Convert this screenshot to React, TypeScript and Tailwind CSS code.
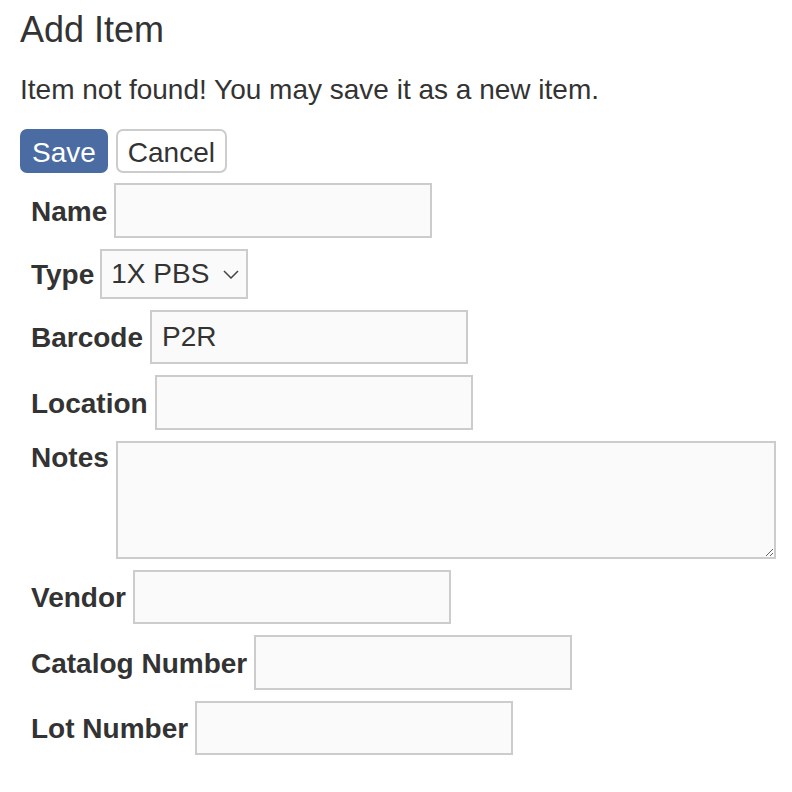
import { useState } from 'react';

const inputCls =
  'h-[54.5px] w-[318px] shrink-0 border-2 border-[#cccccc] bg-[#fafafa] px-[10px] text-[28px] text-[#333] outline-none';

function Row({ label, children, top }: { label: string; children: React.ReactNode; top?: boolean }) {
  return (
    <div className={top ? 'flex items-start gap-[7px]' : 'flex items-center gap-[7px]'}>
      <label className={top ? 'mt-[1px] text-[28px] leading-[32px] font-bold text-[#333]' : 'mt-[3px] text-[28px] leading-[32px] font-bold text-[#333]'}>
        {label}
      </label>
      {children}
    </div>
  );
}

export default function App() {
  const [barcode, setBarcode] = useState('P2R');
  const [type, setType] = useState('1X PBS');

  return (
    <div className="min-h-[792px] bg-white px-[20px] pt-[10px] font-['Liberation_Sans',Arial,sans-serif] text-[#333]">
      <h1 className="text-[36px] leading-[40px] font-normal">Add Item</h1>
      <p className="mt-[24px] text-[28px] leading-[32px]">Item not found! You may save it as a new item.</p>

      <div className="mt-[23px] flex gap-[8px]">
        <button className="h-[44px] rounded-[7px] bg-[#4a6ca3] px-[12px] pt-[3px] text-[28px] leading-[32px] text-white">
          Save
        </button>
        <button className="h-[44px] rounded-[7px] border-2 border-[#cccccc] bg-white px-[10px] pt-[3px] text-[28px] leading-[32px] text-[#333]">
          Cancel
        </button>
      </div>

      <form className="mt-[10px] flex flex-col gap-[11px] pl-[11px]">
        <Row label="Name">
          <input className={inputCls} />
        </Row>
        <Row label="Type">
          <div className="relative -ml-[1px] shrink-0">
            <select
              value={type}
              onChange={(e) => setType(e.target.value)}
              className="h-[50px] w-[148px] appearance-none border-2 border-[#cccccc] bg-[#fafafa] pl-[9px] text-[28px] text-[#333] outline-none"
            >
              <option>1X PBS</option>
            </select>
            <svg
              className="pointer-events-none absolute right-[9px] top-[21px]"
              width="16"
              height="9"
              viewBox="0 0 16 9"
              fill="none"
            >
              <path d="M1 1l7 7 7-7" stroke="#444" strokeWidth="1.5" />
            </svg>
          </div>
        </Row>
        <Row label="Barcode">
          <input className={inputCls} value={barcode} onChange={(e) => setBarcode(e.target.value)} />
        </Row>
        <Row label="Location">
          <input className={inputCls} />
        </Row>
        <Row label="Notes" top>
          <textarea className="h-[118px] w-[660px] shrink-0 border-2 border-[#cccccc] bg-[#fafafa] px-[10px] text-[28px] outline-none" />
        </Row>
        <Row label="Vendor">
          <input className={inputCls} />
        </Row>
        <Row label="Catalog Number">
          <input className={inputCls} />
        </Row>
        <Row label="Lot Number">
          <input className={inputCls} />
        </Row>
      </form>
    </div>
  );
}
